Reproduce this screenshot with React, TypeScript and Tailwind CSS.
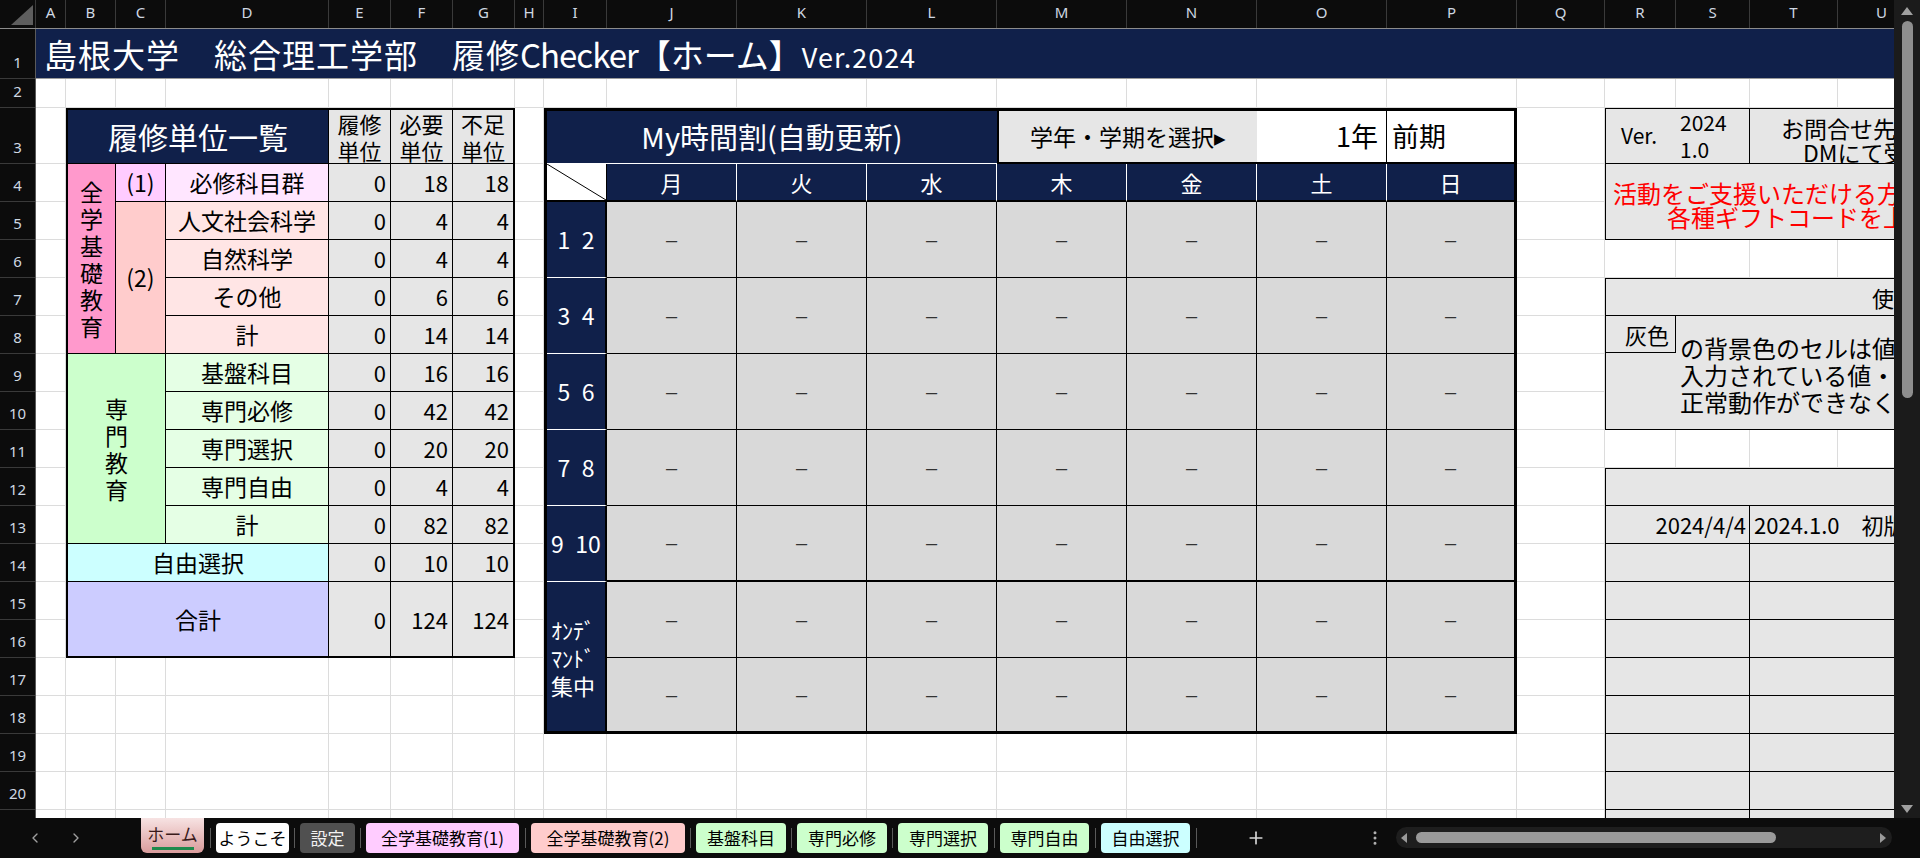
import { Fragment } from 'react';
import { ChevronLeft, ChevronRight, Plus, EllipsisVertical } from 'lucide-react';

const columns = [
  { label: 'A', w: 'w-[30px]' },
  { label: 'B', w: 'w-[50px]' },
  { label: 'C', w: 'w-[50px]' },
  { label: 'D', w: 'w-[163px]' },
  { label: 'E', w: 'w-[62px]' },
  { label: 'F', w: 'w-[62px]' },
  { label: 'G', w: 'w-[62px]' },
  { label: 'H', w: 'w-[29px]' },
  { label: 'I', w: 'w-[63px]' },
  { label: 'J', w: 'w-[130px]' },
  { label: 'K', w: 'w-[130px]' },
  { label: 'L', w: 'w-[130px]' },
  { label: 'M', w: 'w-[130px]' },
  { label: 'N', w: 'w-[130px]' },
  { label: 'O', w: 'w-[130px]' },
  { label: 'P', w: 'w-[130px]' },
  { label: 'Q', w: 'w-[88px]' },
  { label: 'R', w: 'w-[71px]' },
  { label: 'S', w: 'w-[74px]' },
  { label: 'T', w: 'w-[88px]' },
  { label: 'U', w: 'w-[88px]' },
];

const rowHeights = [
  'h-[50px]',
  'h-[29px]',
  'h-[56px]',
  ...Array.from({ length: 18 }, () => 'h-[38px]'),
];

const days = ['月', '火', '水', '木', '金', '土', '日'];
const periods = ['1\u20022', '3\u20024', '5\u20026', '7\u20028', '9\u200210'];

const tabs = [
  { label: 'ようこそ', cls: 'w-[73px] bg-white text-black', sep: 'w-[11px]' },
  { label: '設定', cls: 'w-[55px] bg-[#505050] text-[#f2f2f2]', sep: 'w-[11px]' },
  { label: '全学基礎教育(1)', cls: 'w-[153px] bg-[#ffccff] text-black', sep: 'w-[12px]' },
  { label: '全学基礎教育(2)', cls: 'w-[154px] bg-[#ffcccc] text-black', sep: 'w-[11px]' },
  { label: '基盤科目', cls: 'w-[90px] bg-[#ccffcc] text-black', sep: 'w-[11px]' },
  { label: '専門必修', cls: 'w-[90px] bg-[#ccffcc] text-black', sep: 'w-[11px]' },
  { label: '専門選択', cls: 'w-[90px] bg-[#ccffcc] text-black', sep: 'w-[12px]' },
  { label: '専門自由', cls: 'w-[89px] bg-[#ccffcc] text-black', sep: 'w-[12px]' },
  { label: '自由選択', cls: 'w-[89px] bg-[#ccffff] text-black', sep: 'w-[12px]' },
];

export default function App() {
  return (
    <div className="flex h-[858px] w-[1920px] flex-col overflow-hidden bg-[#0c0c0c] font-['Noto_Sans_CJK_JP',sans-serif] text-black">
      <div className="flex h-[818px] shrink-0">
        <div className="flex w-[1894px] shrink-0 flex-col overflow-hidden">
          <ColumnHeader />
          <div className="flex min-h-0 flex-1">
            <RowHeader />
            <Sheet />
          </div>
        </div>
        <VScroll />
      </div>
      <SheetTabs />
    </div>
  );
}

function ColumnHeader() {
  return (
    <div className="flex h-[29px] shrink-0 border-b border-[#8c8c8c] bg-[#0c0c0c] font-['Noto_Sans',sans-serif] text-[15px] text-[#cfd8e2]">
      <div className="w-[36px] shrink-0 border-r border-[#3a3a3a]">
        <svg width="35" height="28" viewBox="0 0 35 28" className="block">
          <polygon points="33,5 33,25 11,25" fill="#5e5e5e" />
        </svg>
      </div>
      {columns.map(c => (
        <div
          key={c.label}
          className={`${c.w} flex shrink-0 items-center justify-center border-r border-[#3a3a3a] pb-[3px]`}
        >
          {c.label}
        </div>
      ))}
    </div>
  );
}

function RowHeader() {
  return (
    <div className="flex w-[36px] shrink-0 flex-col border-r border-[#5a5a5a] bg-[#0c0c0c] font-['Noto_Sans',sans-serif] text-[15px] text-[#cfd8e2]">
      {rowHeights.map((h, i) => (
        <div
          key={i}
          className={`${h} flex shrink-0 items-end justify-center border-b border-[#3a3a3a] pb-[5px]`}
        >
          {i + 1}
        </div>
      ))}
    </div>
  );
}

function Sheet() {
  return (
    <div className="grid min-w-0 flex-1 auto-rows-[38px] grid-cols-[30px_50px_50px_163px_62px_62px_62px_29px_63px_repeat(7,130px)_88px_71px_74px_88px_88px] grid-rows-[50px_29px_56px_repeat(18,38px)] overflow-hidden bg-white">
      {/* Title bar */}
      <div className="col-span-21 col-start-1 row-start-1 flex items-center whitespace-nowrap border-b border-[#9a9a9a] bg-[#10204a] pl-[8px] pt-[2px] text-white">
        <div>
          <span className="text-[33px] tracking-[1px]">島根大学　総合理工学部　履修</span>
          <span className="text-[33px] tracking-[-1px]">Checker</span>
          <span className="text-[33px]">【ホーム】</span>
          <span className="text-[27px] tracking-[1px]">Ver.2024</span>
        </div>
      </div>

      <CreditTable />
      <Timetable />
      <InfoPanel />

      {/* sheet gridlines fill whatever cells stay empty */}
      {Array.from({ length: 441 }, (_, i) => (
        <div key={i} className="border-r border-b border-[#dcdcdc]" />
      ))}
    </div>
  );
}

function Nums({ v, total }: { v: number[]; total?: boolean }) {
  if (total) {
    return (
      <>
        <div className="row-span-2 flex items-center justify-end border-r border-black bg-[#e6e6e6] pr-[4px] text-[22px]">{v[0]}</div>
        <div className="row-span-2 flex items-center justify-end border-r border-black bg-[#e6e6e6] pr-[4px] text-[22px]">{v[1]}</div>
        <div className="row-span-2 flex items-center justify-end bg-[#e6e6e6] pr-[4px] text-[22px]">{v[2]}</div>
      </>
    );
  }
  return (
    <>
      <div className="flex items-center justify-end border-r border-b border-black bg-[#e6e6e6] pr-[4px] text-[22px]">{v[0]}</div>
      <div className="flex items-center justify-end border-r border-b border-black bg-[#e6e6e6] pr-[4px] text-[22px]">{v[1]}</div>
      <div className="flex items-center justify-end border-b border-black bg-[#e6e6e6] pr-[4px] text-[22px]">{v[2]}</div>
    </>
  );
}

function CreditTable() {
  const pink = 'flex items-center justify-center border-r border-b border-black bg-[#ffe5e5] text-[23px]';
  const green = 'flex items-center justify-center border-r border-b border-black bg-[#e5ffe5] text-[23px]';
  const head = 'flex items-center justify-center border-b border-black bg-[#e6e6e6] text-center text-[22px] leading-[27px]';

  return (
    <div className="col-span-6 col-start-2 row-span-14 row-start-3 grid grid-cols-[48px_50px_163px_62px_62px_1fr] grid-rows-[54px_repeat(12,38px)_1fr] border-2 border-black">
      <div className="col-span-3 flex items-center justify-center border-r border-b border-black bg-[#10204a] text-[30px] text-white">
        履修単位一覧
      </div>
      <div className={`${head} border-r`}>履修<br />単位</div>
      <div className={`${head} border-r`}>必要<br />単位</div>
      <div className={head}>不足<br />単位</div>

      {/* 全学基礎教育 */}
      <div className="row-span-5 flex items-center justify-center border-r border-b border-black bg-[#ff99cc]">
        <span className="w-[24px] break-all text-center text-[23px] leading-[27px]">全学基礎教育</span>
      </div>
      <div className="flex items-center justify-center border-r border-b border-black bg-[#ffccff] text-[23px]">(1)</div>
      <div className="flex items-center justify-center border-r border-b border-black bg-[#ffe6ff] text-[23px]">必修科目群</div>
      <Nums v={[0, 18, 18]} />

      <div className="row-span-4 flex items-center justify-center border-r border-b border-black bg-[#ffcccc] text-[23px]">(2)</div>
      <div className={pink}>人文社会科学</div>
      <Nums v={[0, 4, 4]} />
      <div className={pink}>自然科学</div>
      <Nums v={[0, 4, 4]} />
      <div className={pink}>その他</div>
      <Nums v={[0, 6, 6]} />
      <div className={pink}>計</div>
      <Nums v={[0, 14, 14]} />

      {/* 専門教育 */}
      <div className="col-span-2 row-span-5 flex items-center justify-center border-r border-b border-black bg-[#ccffcc]">
        <span className="w-[24px] break-all text-center text-[23px] leading-[27px]">専門教育</span>
      </div>
      <div className={green}>基盤科目</div>
      <Nums v={[0, 16, 16]} />
      <div className={green}>専門必修</div>
      <Nums v={[0, 42, 42]} />
      <div className={green}>専門選択</div>
      <Nums v={[0, 20, 20]} />
      <div className={green}>専門自由</div>
      <Nums v={[0, 4, 4]} />
      <div className={green}>計</div>
      <Nums v={[0, 82, 82]} />

      <div className="col-span-3 flex items-center justify-center border-r border-b border-black bg-[#ccffff] text-[23px]">自由選択</div>
      <Nums v={[0, 10, 10]} />

      <div className="col-span-3 row-span-2 flex items-center justify-center border-r border-black bg-[#ccccff] text-[23px]">合計</div>
      <Nums v={[0, 124, 124]} total />
    </div>
  );
}

function slotClass(col: number, thick: boolean, last: boolean) {
  if (last) {
    return col === 6
      ? 'flex items-center justify-center bg-[#d9d9d9]'
      : 'flex items-center justify-center border-r border-black bg-[#d9d9d9]';
  }
  if (thick) {
    return col === 6
      ? 'flex items-center justify-center border-b-2 border-black bg-[#d9d9d9]'
      : 'flex items-center justify-center border-r border-b-2 border-black bg-[#d9d9d9]';
  }
  return col === 6
    ? 'flex items-center justify-center border-b border-black bg-[#d9d9d9]'
    : 'flex items-center justify-center border-r border-b border-black bg-[#d9d9d9]';
}

function Dash() {
  return <span className="font-['Liberation_Sans',sans-serif] text-[20px] text-[#333]">–</span>;
}

function Timetable() {
  return (
    <div className="col-span-8 col-start-9 row-span-16 row-start-3 grid grid-cols-[60px_repeat(6,130px)_1fr] grid-rows-[53px_38px_repeat(6,76px)_1fr] border-[3px] border-black">
      <div className="col-span-4 flex items-center justify-center border-b border-white bg-[#10204a] text-[29px] text-white">
        My時間割(自動更新)
      </div>
      <div className="col-span-2 flex items-center justify-center border-l-2 border-b-2 border-black bg-[#e6e6e6] text-[23px]">
        学年・学期を選択▸
      </div>
      <div className="flex items-center justify-end border-r border-b-2 border-black bg-white pr-[8px] text-[27px]">1年</div>
      <div className="flex items-center border-b-2 border-black bg-white pl-[5px] text-[27px]">前期</div>

      <div className="border-r border-b-2 border-black bg-white">
        <svg className="block h-full w-full" viewBox="0 0 10 10" preserveAspectRatio="none">
          <line x1="0" y1="0" x2="10" y2="10" stroke="#000" strokeWidth="1" vectorEffect="non-scaling-stroke" />
        </svg>
      </div>
      {days.map((d, i) => (
        <div
          key={d}
          className={
            i === 6
              ? 'flex items-center justify-center border-b-2 border-black bg-[#10204a] text-[22px] text-white'
              : 'flex items-center justify-center border-r border-b-2 border-r-white border-b-black bg-[#10204a] text-[22px] text-white'
          }
        >
          {d}
        </div>
      ))}

      {periods.map((p, r) => (
        <Fragment key={p}>
          <div className="flex items-center justify-center border-r-2 border-b border-r-black border-b-white bg-[#10204a] text-[23px] text-white">
            {p}
          </div>
          {days.map((d, i) => (
            <div key={d} className={slotClass(i, r === 4, false)}>
              <Dash />
            </div>
          ))}
        </Fragment>
      ))}

      <div className="row-span-2 flex flex-col justify-center border-r-2 border-black bg-[#10204a] pl-[4px] text-[22px] leading-[28px] text-white">
        ｵﾝﾃﾞ<br />ﾏﾝﾄﾞ<br />集中
      </div>
      {days.map((d, i) => (
        <div key={d} className={slotClass(i, false, false)}>
          <Dash />
        </div>
      ))}
      {days.map((d, i) => (
        <div key={d} className={slotClass(i, false, true)}>
          <Dash />
        </div>
      ))}
    </div>
  );
}

function InfoPanel() {
  return (
    <>
      {/* version */}
      <div className="col-span-2 col-start-18 row-start-3 flex items-center border border-black bg-[#e6e6e6] pl-[15px] text-[21px]">
        <span>Ver.</span>
        <span className="ml-[23px] flex flex-col leading-[27px]">
          <span>2024</span>
          <span>1.0</span>
        </span>
      </div>
      <div className="col-span-2 col-start-20 row-start-3 flex flex-col justify-center overflow-hidden whitespace-nowrap border-y border-r border-black bg-[#e6e6e6] pt-[8px] text-[23px] leading-[24px]">
        <span className="pl-[31px]">お問合せ先はこちら</span>
        <span className="pl-[53px]">DMにて受け付けます</span>
      </div>

      {/* support message */}
      <div className="col-span-4 col-start-18 row-span-2 row-start-4 flex flex-col justify-center overflow-hidden whitespace-nowrap border-x border-b border-black bg-[#e6e6e6] pt-[6px] text-[24px] leading-[24px] text-[#ff0000]">
        <span className="pl-[7px]">活動をご支援いただける方は</span>
        <span className="pl-[61px]">各種ギフトコードを上記DMまで</span>
      </div>

      {/* usage notes */}
      <div className="col-span-4 col-start-18 row-start-7 flex items-center overflow-hidden whitespace-nowrap border border-black bg-[#e6e6e6] pl-[266px] text-[22px]">
        使い方
      </div>
      <div className="col-span-4 col-start-18 row-span-3 row-start-8 grid grid-cols-[70px_1fr] grid-rows-[37px_1fr] overflow-hidden border-x border-b border-black bg-[#e6e6e6]">
        <div className="flex items-center justify-end border-r border-b border-black pr-[6px] text-[22px]">灰色</div>
        <div className="col-start-2 row-span-2 row-start-1 flex flex-col justify-center overflow-hidden whitespace-nowrap pl-[4px] pt-[4px] text-[24px] leading-[27px]">
          <span>の背景色のセルは値を変更しないでください。</span>
          <span>入力されている値・数式を変更すると</span>
          <span>正常動作ができなくなります。</span>
        </div>
      </div>

      {/* history */}
      <div className="col-span-4 col-start-18 row-span-10 row-start-12 grid grid-cols-[144px_1fr] grid-rows-[37px_repeat(9,38px)] overflow-hidden border-x border-t border-black bg-[#e6e6e6] text-[22px]">
        <div className="col-span-2 border-b border-black" />
        <div className="flex items-center justify-end border-r border-b border-black pr-[3px]">2024/4/4</div>
        <div className="flex items-center whitespace-nowrap border-b border-black pl-[4px]">2024.1.0　初版リリース</div>
        {Array.from({ length: 8 }, (_, i) => (
          <Fragment key={i}>
            <div className="border-r border-b border-black" />
            <div className="border-b border-black" />
          </Fragment>
        ))}
      </div>
    </>
  );
}

function VScroll() {
  return (
    <div className="flex w-[26px] shrink-0 flex-col items-center bg-[#1b1b1b] pt-[7px] pb-[5px]">
      <svg width="12" height="8" viewBox="0 0 12 8" className="block">
        <polygon points="6,0 12,8 0,8" fill="#a0a0a0" />
      </svg>
      <div className="mt-[6px] h-[377px] w-[11px] rounded-full bg-[#8e8e8e]" />
      <div className="flex-1" />
      <svg width="12" height="8" viewBox="0 0 12 8" className="block">
        <polygon points="0,0 12,0 6,8" fill="#a0a0a0" />
      </svg>
    </div>
  );
}

function SheetTabs() {
  return (
    <div className="flex h-[40px] shrink-0 items-start bg-[#0c0c0c] text-[17px]">
      <div className="flex h-full w-[141px] shrink-0 items-center text-[#a0a0a0]">
        <ChevronLeft size={16} className="ml-[27px]" />
        <ChevronRight size={16} className="ml-[25px]" />
      </div>

      <div className="flex h-[35px] w-[63px] shrink-0 flex-col items-center rounded-b-[6px] bg-linear-to-b from-[#f7e3e3] to-[#d99c9c] pt-[5px] text-[#3a1a1a]">
        <span className="leading-[22px]">ホーム</span>
        <span className="mt-[2px] h-[3px] w-[42px] bg-[#1f8a4c]" />
      </div>
      <div className="flex h-full w-[12px] shrink-0 justify-center pt-[10px]">
        <div className="h-[20px] w-px bg-[#5a5a5a]" />
      </div>

      {tabs.map(t => (
        <Fragment key={t.label}>
          <div className={`${t.cls} mt-[5px] flex h-[30px] shrink-0 items-center justify-center rounded-[4px]`}>
            {t.label}
          </div>
          <div className={`${t.sep} flex h-full shrink-0 justify-center pt-[10px]`}>
            <div className="h-[20px] w-px bg-[#5a5a5a]" />
          </div>
        </Fragment>
      ))}

      <Plus size={20} className="ml-[44px] mt-[10px] shrink-0 text-[#d6d6d6]" />
      <EllipsisVertical size={18} className="ml-[100px] mt-[11px] shrink-0 text-[#b0b0b0]" />

      <div className="ml-[12px] mt-[9px] flex h-[21px] w-[496px] shrink-0 items-center rounded-full bg-[#1e1e1e]">
        <svg width="6" height="10" viewBox="0 0 6 10" className="ml-[5px] block">
          <polygon points="6,0 6,10 0,5" fill="#9a9a9a" />
        </svg>
        <div className="ml-[9px] h-[11px] w-[360px] rounded-full bg-[#9a9a9a]" />
        <div className="flex-1" />
        <svg width="6" height="10" viewBox="0 0 6 10" className="mr-[6px] block">
          <polygon points="0,0 6,5 0,10" fill="#9a9a9a" />
        </svg>
      </div>
    </div>
  );
}
